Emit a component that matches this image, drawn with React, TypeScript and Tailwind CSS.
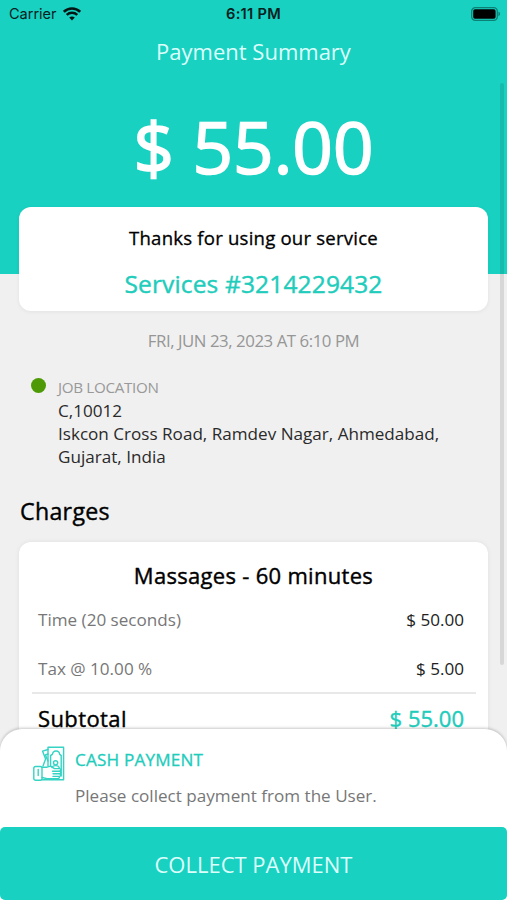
import React from "react";

const charges = [
  { label: "Time (20 seconds)", amount: "$ 50.00" },
  { label: "Tax @ 10.00 %", amount: "$ 5.00" },
];

const WifiIcon = () => (
  <svg width="18" height="14" viewBox="0 0 18 14" fill="none" stroke="#041614">
    <path d="M0.8 4.8C5.4 0.4 12.6 0.4 17.2 4.8" strokeWidth="2.7" />
    <path d="M3.7 7.9C6.7 5.1 11.3 5.1 14.3 7.9" strokeWidth="2.4" />
    <path d="M9 13.6L6.2 10.6C7.8 9.1 10.2 9.1 11.8 10.6Z" fill="#041614" stroke="none" />
  </svg>
);

const BatteryIcon = () => (
  <svg width="30" height="14" viewBox="0 0 30 14">
    <rect x="0.7" y="0.7" width="25.6" height="12.6" rx="3.6" fill="none" stroke="#0d8076" strokeWidth="1.3" />
    <rect x="2.2" y="2.2" width="22.4" height="9.6" rx="1.8" fill="#000" />
    <path d="M27.4 4.8C29.6 5.4 29.6 8.6 27.4 9.2Z" fill="#0d8076" />
  </svg>
);

const CashIcon = () => (
  <svg width="32" height="36" viewBox="0 0 32 36" fill="none" stroke="#35d3c4" strokeWidth="1.4" strokeLinejoin="round" strokeLinecap="round">
    {/* Bills */}
    <path d="M15 20V1.2H30.6V33.8H9" />
    <path d="M17.6 20V9.5C19.3 9 20 7.8 20.2 6.2C21.8 4.6 24.4 4.6 26 6.2C26.2 7.8 27 9 28.2 9.5V30" />
    <path d="M15 3.5L9.6 5.2L12.6 13L10 20" />
    <path d="M15 8L12.4 9L15 15" />
    <circle cx="22.6" cy="16.8" r="2.1" />
    <path d="M19 21.5C20 19 25.2 19 26.2 21.5" />
    {/* Hand */}
    <path d="M9 21.2H14L17.5 20.2L21.5 22.6H26.5C28.2 22.6 28.2 25.2 26.5 25.2H19.5" />
    <path d="M26.5 25.2C28.2 25.2 28.2 27.8 26.5 27.8H20M26.5 27.8C28 27.8 28 30.4 26.5 30.4H20M25.5 30.4C26.8 30.4 26.8 32.6 25 32.6H14L9 31.5" />
    {/* Cuff */}
    <rect x="0.8" y="20.5" width="8.2" height="13.7" rx="1.8" />
    <path d="M5.2 23.5V29.5" />
  </svg>
);

export default function App() {
  return (
    <div className="relative flex h-[900px] w-[507px] flex-col overflow-hidden bg-[#f0f0f0] font-['Open_Sans',sans-serif]">
      {/* Header */}
      <header className="h-[274px] shrink-0 bg-[#18d1c1]">
        <div className="grid h-[28px] grid-cols-3 items-center px-[7px] font-['Inter',sans-serif] text-[#06201d]">
          <div className="flex items-center gap-[6px] pl-[2px]">
            <span className="text-[14.5px]">Carrier</span>
            <WifiIcon />
          </div>
          <span className="pt-px text-center text-[14.6px] font-semibold tracking-[0.3px]">6:11 PM</span>
          <div className="-mr-px flex justify-end">
            <BatteryIcon />
          </div>
        </div>
        <h1 className="mt-[7px] text-center text-[22px] leading-[32px] text-[#dcfffb]">Payment Summary</h1>
        <p className="mt-[30px] text-center text-[71px] leading-[100px] text-white [-webkit-text-stroke:1.7px_#fff]">$ 55.00</p>
      </header>

      {/* Service card */}
      <section className="relative mx-[19px] mt-[-67px] h-[104px] shrink-0 rounded-[12px] bg-white pt-[17px] text-center shadow-[0_1px_4px_rgba(0,0,0,0.06)]">
        <p className="text-[18.6px] leading-[28px] tracking-[0.2px] text-black [-webkit-text-stroke:0.3px_#000]">Thanks for using our service</p>
        <p className="mt-[15px] text-[24.5px] leading-[34px] tracking-[0.15px] text-[#20ccbb] [-webkit-text-stroke:0.4px_#20ccbb]">Services #3214229432</p>
      </section>

      <p className="mt-[18px] text-center text-[16.8px] leading-[24px] tracking-[-0.44px] text-[#969696]">FRI, JUN 23, 2023 AT 6:10 PM</p>

      {/* Location */}
      <section className="mt-[21px] flex pl-[31px]">
        <span className="mt-[4px] h-[15px] w-[15px] shrink-0 rounded-full bg-[#4e9a06]" />
        <div className="ml-[12px]">
          <p className="mt-px text-[15.2px] leading-[24px] tracking-[-0.32px] text-[#999999]">JOB LOCATION</p>
          <p className="text-[17.1px] leading-[23.2px] whitespace-nowrap text-[#2a2a2a]">
            C,10012
            <br />
            Iskcon Cross Road, Ramdev Nagar, Ahmedabad,
            <br />
            Gujarat, India
          </p>
        </div>
      </section>

      {/* Charges */}
      <h2 className="mt-[26px] ml-[20px] text-[23.2px] leading-[32px] tracking-[0.3px] text-black [-webkit-text-stroke:0.4px_#000]">Charges</h2>
      <section className="mx-[19px] mt-[15px] h-[300px] shrink-0 rounded-[12px] bg-white px-[13px] pt-[16px] shadow-[0_0_5px_rgba(0,0,0,0.07)]">
        <h3 className="text-center text-[22px] leading-[34px] tracking-[0.3px] text-black [-webkit-text-stroke:0.4px_#000]">Massages - 60 minutes</h3>
        <div className="mt-[4px] px-[6px]">
          {charges.map((charge) => (
            <div key={charge.label} className="flex h-[49px] items-center justify-between text-[17.1px]">
              <span className="text-[#777777]">{charge.label}</span>
              <span className="pr-[5px] text-[#222222]">{charge.amount}</span>
            </div>
          ))}
        </div>
        <div className="-mt-[2px] -mr-px h-[2px] bg-[#e8e8e8]" />
        <div className="mt-[7px] flex justify-between pr-[11px] pl-[6px] text-[22px] leading-[34px]">
          <span className="tracking-[0.4px] text-black [-webkit-text-stroke:0.4px_#000]">Subtotal</span>
          <span className="text-[#20ccbb] [-webkit-text-stroke:0.4px_#20ccbb]">$ 55.00</span>
        </div>
      </section>

      {/* Scroll indicator */}
      <div className="absolute top-[83px] right-[3px] h-[582px] w-[4px] rounded-full bg-black/10" />

      {/* Payment sheet */}
      <footer className="absolute inset-x-0 bottom-0 flex h-[171px] flex-col rounded-t-[22px] bg-white shadow-[0_-1px_3px_rgba(0,0,0,0.22)]">
        <div className="flex h-[98px] pt-[17px] pl-[33px]">
          <CashIcon />
          <div className="ml-[10px]">
            <p className="pt-px text-[17.1px] leading-[26px] tracking-[0.2px] text-[#20ccbb] [-webkit-text-stroke:0.3px_#20ccbb]">CASH PAYMENT</p>
            <p className="mt-[10px] text-[17.1px] leading-[26px] text-[#777777]">Please collect payment from the User.</p>
          </div>
        </div>
        <button className="h-[73px] w-full rounded-[5px] bg-[#18d1c1] pt-px text-[22px] text-[#dcfffb]">COLLECT PAYMENT</button>
      </footer>
    </div>
  );
}
